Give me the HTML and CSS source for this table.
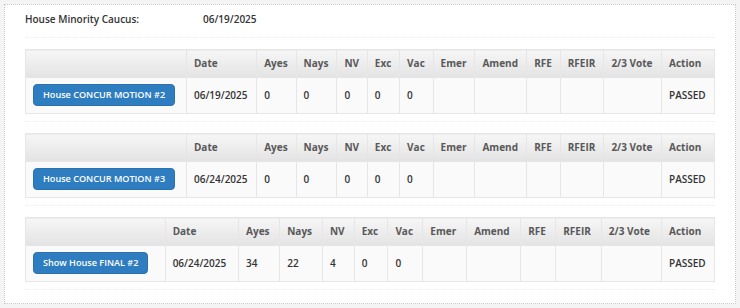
FILE: index.html
```html
<!DOCTYPE html>
<html lang="en">
<head>
  <meta charset="UTF-8" />
  <title>House Minority Caucus - Votes</title>
  <link rel="stylesheet" href="styles.css">
</head>
<body>

  <div class="panel">
    <div class="caucus">
      <span class="caucus-label">House Minority Caucus:</span>
      <span class="caucus-date">06/19/2025</span>
    </div>

    <div class="vote-block">
      <table class="votes">
        <thead>
          <tr>
            <th></th><th>Date</th><th>Ayes</th><th>Nays</th><th>NV</th><th>Exc</th><th>Vac</th>
            <th>Emer</th><th>Amend</th><th>RFE</th><th>RFEIR</th><th>2/3 Vote</th><th class="action">Action</th>
          </tr>
        </thead>
        <tbody>
          <tr>
            <td><button class="btn">House CONCUR MOTION #2</button></td>
            <td>06/19/2025</td><td>0</td><td>0</td><td>0</td><td>0</td><td>0</td>
            <td></td><td></td><td></td><td></td><td></td><td class="action">PASSED</td>
          </tr>
        </tbody>
      </table>
    </div>

    <div class="vote-block">
      <table class="votes">
        <thead>
          <tr>
            <th></th><th>Date</th><th>Ayes</th><th>Nays</th><th>NV</th><th>Exc</th><th>Vac</th>
            <th>Emer</th><th>Amend</th><th>RFE</th><th>RFEIR</th><th>2/3 Vote</th><th class="action">Action</th>
          </tr>
        </thead>
        <tbody>
          <tr>
            <td><button class="btn">House CONCUR MOTION #3</button></td>
            <td>06/24/2025</td><td>0</td><td>0</td><td>0</td><td>0</td><td>0</td>
            <td></td><td></td><td></td><td></td><td></td><td class="action">PASSED</td>
          </tr>
        </tbody>
      </table>
    </div>

    <div class="vote-block">
      <table class="votes">
        <thead>
          <tr>
            <th></th><th>Date</th><th>Ayes</th><th>Nays</th><th>NV</th><th>Exc</th><th>Vac</th>
            <th>Emer</th><th>Amend</th><th>RFE</th><th>RFEIR</th><th>2/3 Vote</th><th class="action">Action</th>
          </tr>
        </thead>
        <tbody>
          <tr>
            <td><button class="btn">Show House FINAL #2</button></td>
            <td>06/24/2025</td><td>34</td><td>22</td><td>4</td><td>0</td><td>0</td>
            <td></td><td></td><td></td><td></td><td></td><td class="action">PASSED</td>
          </tr>
        </tbody>
      </table>
    </div>
  </div>

</body>
</html>
```

FILE: styles.css
```css
body {
  font-family: 'Open Sans', 'Liberation Sans', sans-serif;
  font-size: 10px;
  font-weight: 600;
  color: #333;
  background-color: #f4f4f4;
  margin: 4px;
}

.panel {
  background: #fff;
  border: 1px dotted #c8c8c8;
  padding: 2px 20px 13px;
}

.caucus {
  display: flex;
  line-height: 14px;
  padding: 5px 0 11px;
  border-bottom: 1px dotted #ececec;
  margin-bottom: 11px;
}

.caucus-label {
  width: 178px;
}

.vote-block {
  padding-bottom: 7px;
  border-bottom: 1px dotted #ececec;
  margin-bottom: 11px;
}

.vote-block:last-child {
  margin-bottom: 0;
}

.votes {
  width: 100%;
  border-collapse: collapse;
  border: 1px solid #e3e3e3;
}

.votes th,
.votes td {
  border: 1px solid #e6e6e6;
  padding: 6px 7px 7px;
  line-height: 14px;
  text-align: left;
  white-space: nowrap;
  vertical-align: middle;
}

.votes th {
  font-weight: 700;
  color: #585858;
  background: linear-gradient(to bottom, #f6f6f6, #e3e3e3);
}

.votes td {
  background-color: #fafafa;
}

.votes .action {
  width: 38px;
}

.btn {
  display: block;
  font-family: 'Open Sans', 'Liberation Sans', sans-serif;
  font-size: 9.1px;
  font-weight: 600;
  line-height: 14px;
  color: #fff;
  background-color: #2e7dc0;
  border: 1px solid #2a71ae;
  border-radius: 4px;
  padding: 3px 9px;
  cursor: pointer;
}
```
